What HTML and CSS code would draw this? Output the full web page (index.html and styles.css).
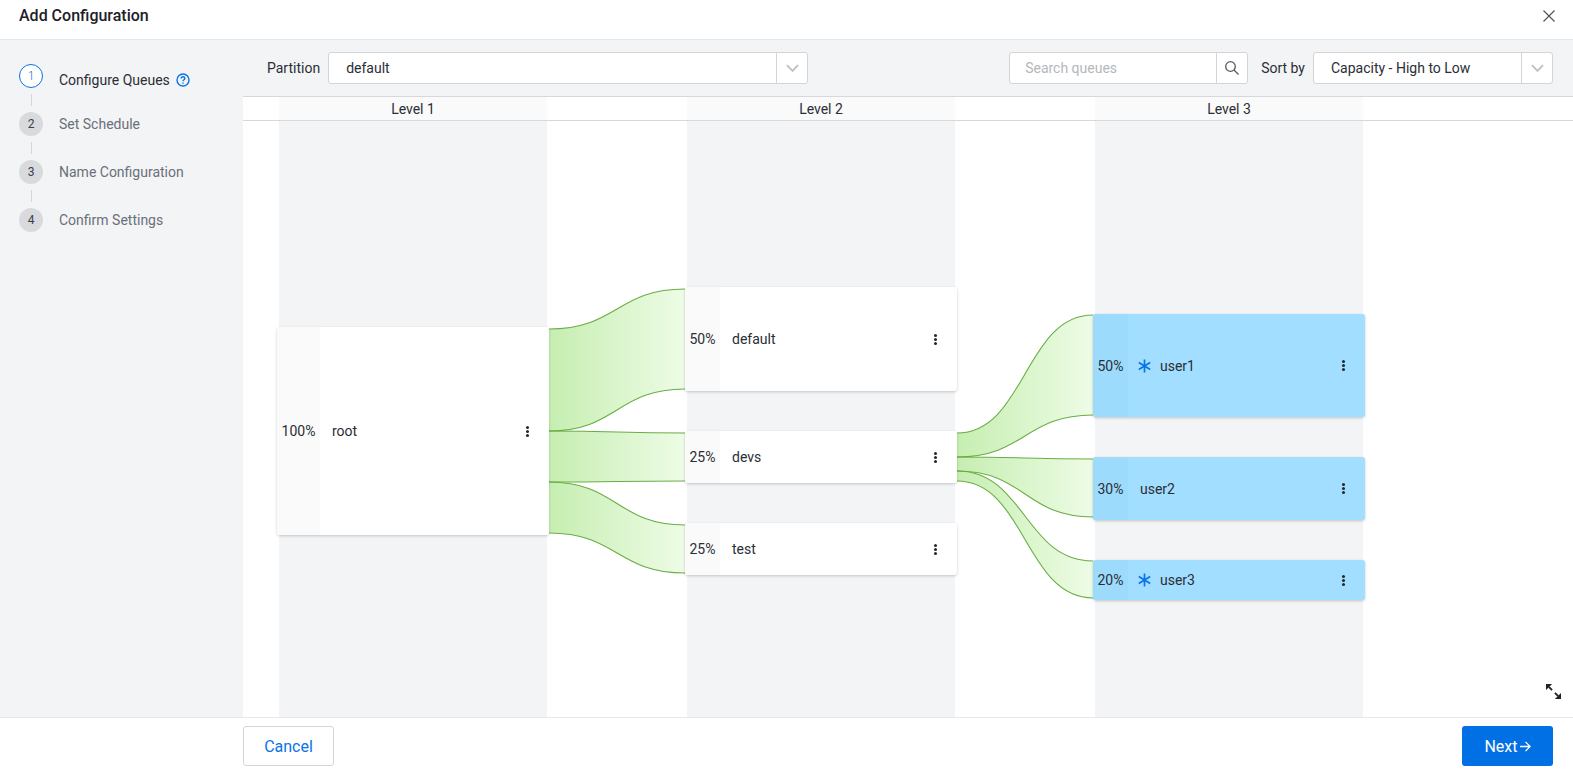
FILE: index.html
```html
<!DOCTYPE html>
<html lang="en">
<head>
<meta charset="utf-8">
<title>Add Configuration</title>
<link rel="stylesheet" href="styles.css">
</head>
<body>
<div class="dialog">
  <header class="title-bar">
    <h1 class="title">Add Configuration</h1>
    <svg class="close" viewBox="0 0 12 12"><path d="M.5.5l11 11M11.500.5l-11 11"/></svg>
  </header>
  <div class="main">
    <nav class="steps">
      <div class="step active"><span class="bubble">1</span><span class="step-label">Configure Queues</span>
        <svg class="help" viewBox="0 0 14 14"><circle cx="7" cy="7" r="6"/><path d="M5.200 5.500c0-1 .8-1.800 1.800-1.800s1.800.8 1.800 1.700c0 1.400-1.800 1.300-1.800 2.900"/><path d="M7 9.400v1.300"/></svg>
      </div>
      <div class="connector"></div>
      <div class="step"><span class="bubble">2</span><span class="step-label">Set Schedule</span></div>
      <div class="connector"></div>
      <div class="step"><span class="bubble">3</span><span class="step-label">Name Configuration</span></div>
      <div class="connector"></div>
      <div class="step"><span class="bubble">4</span><span class="step-label">Confirm Settings</span></div>
    </nav>
    <section class="content">
      <div class="toolbar">
        <label class="field-label">Partition</label>
        <div class="select partition"><span class="select-value">default</span><span class="select-arrow"><svg viewBox="0 0 14 8"><path d="M1 1l6 6 6-6"/></svg></span></div>
        <div class="spacer"></div>
        <div class="search"><span class="search-text">Search queues</span><span class="search-btn"><svg viewBox="0 0 14 14"><circle cx="5.500" cy="5.500" r="4.800"/><path d="M9 9l4.500 4.500"/></svg></span></div>
        <label class="field-label sort-label">Sort by</label>
        <div class="select sort"><span class="select-value">Capacity - High to Low</span><span class="select-arrow"><svg viewBox="0 0 14 8"><path d="M1 1l6 6 6-6"/></svg></span></div>
      </div>
      <div class="canvas">
        <div class="levels">
          <div class="level-head">Level 1</div>
          <div class="level-head">Level 2</div>
          <div class="level-head">Level 3</div>
        </div>
        <div class="stripes">
          <div class="stripe"></div>
          <div class="stripe"></div>
          <div class="stripe"></div>
        </div>
        <svg class="flows" viewBox="243 96 1330 621">
          <defs>
            <linearGradient id="flow" x1="0" x2="1" y1="0" y2="0">
              <stop offset="0" stop-color="#c6eeb1"/>
              <stop offset="1" stop-color="#eefce6"/>
            </linearGradient>
          </defs>
          <path class="flow" d="M549 329C617 329 617 289 685 289V389C617 389 617 431 549 431Z"/>
          <path class="flow" d="M549 431C617 431 617 433 685 433V481C617 481 617 482 549 482Z"/>
          <path class="flow" d="M549 482C617 482 617 525 685 525V573C617 573 617 533 549 533Z"/>
          <path class="flow" d="M957 433C1025 433 1025 315 1093 315V415C1025 415 1025 457 957 457Z"/>
          <path class="flow" d="M957 457C1025 457 1025 459 1093 459V517C1025 517 1025 471 957 471Z"/>
          <path class="flow" d="M957 471C1025 471 1025 561 1093 561V598C1025 598 1025 481 957 481Z"/>
          <path class="edge" d="M549 329C617 329 617 289 685 289M549 431C617 431 617 389 685 389"/>
          <path class="edge" d="M549 431C617 431 617 433 685 433M549 482C617 482 617 481 685 481"/>
          <path class="edge" d="M549 482C617 482 617 525 685 525M549 533C617 533 617 573 685 573"/>
          <path class="edge" d="M957 433C1025 433 1025 315 1093 315M957 457C1025 457 1025 415 1093 415"/>
          <path class="edge" d="M957 457C1025 457 1025 459 1093 459M957 471C1025 471 1025 517 1093 517"/>
          <path class="edge" d="M957 471C1025 471 1025 561 1093 561M957 481C1025 481 1025 598 1093 598"/>
        </svg>
        <div class="node node-root"><span class="pct">100%</span><span class="name">root</span><span class="dots"><i></i><i></i><i></i></span></div>
        <div class="node node-default"><span class="pct">50%</span><span class="name">default</span><span class="dots"><i></i><i></i><i></i></span></div>
        <div class="node node-devs"><span class="pct">25%</span><span class="name">devs</span><span class="dots"><i></i><i></i><i></i></span></div>
        <div class="node node-test"><span class="pct">25%</span><span class="name">test</span><span class="dots"><i></i><i></i><i></i></span></div>
        <div class="node leaf node-user1"><span class="pct">50%</span><svg class="star" viewBox="0 0 13 14"><path d="M6.500 .5v13M.8 3.500l11.400 7M12.200 3.500L.8 10.500"/></svg><span class="name">user1</span><span class="dots"><i></i><i></i><i></i></span></div>
        <div class="node leaf node-user2"><span class="pct">30%</span><span class="name">user2</span><span class="dots"><i></i><i></i><i></i></span></div>
        <div class="node leaf node-user3"><span class="pct">20%</span><svg class="star" viewBox="0 0 13 14"><path d="M6.500 .5v13M.8 3.500l11.400 7M12.200 3.500L.8 10.500"/></svg><span class="name">user3</span><span class="dots"><i></i><i></i><i></i></span></div>
        <svg class="expand" viewBox="0 0 16 16"><path class="expand-line" d="M3 3l3.500 3.500M13 13L9.500 9.500"/><path class="expand-head" d="M0 0h6.500L0 6.500zM16 16H9.500L16 9.500z"/></svg>
      </div>
    </section>
  </div>
  <footer class="footer">
    <button class="btn btn-cancel">Cancel</button>
    <button class="btn btn-next">Next<svg class="arrow" viewBox="0 0 12 12"><path d="M0 6h11M6 1l5 5-5 5"/></svg></button>
  </footer>
</div>
</body>
</html>
```
FILE: styles.css
```css
* { box-sizing: border-box; }
html, body { margin: 0; padding: 0; height: 100%; }
body { font-family: Roboto, "Liberation Sans", sans-serif; font-size: 14px; color: #2a2e35; background: #fff; overflow: hidden; }

.dialog { display: flex; flex-direction: column; height: 773px; }

.title-bar { flex: none; height: 40px; display: flex; align-items: center; justify-content: space-between; padding: 0 18px 8px 19px; border-bottom: 1px solid #e4e6e9; }
.title { margin: 0; font-size: 16px; font-weight: 500; color: #1d2127; }
.close { width: 12px; height: 12px; fill: none; stroke: #4a4f56; stroke-width: 1.1; }

.main { flex: 1; display: flex; min-height: 0; background: #f3f4f6; }

.steps { flex: none; width: 243px; padding: 24px 0 0 19px; }
.step { display: flex; align-items: center; height: 24px; color: #6a7079; }
.bubble { flex: none; width: 24px; height: 24px; border-radius: 50%; background: #d8dade; color: #3b4047; font-size: 12px; display: flex; align-items: center; justify-content: center; margin-right: 16px; }
.step.active { color: #2a2e35; }
.step.active .step-label { margin-top: 7px; }
.step.active .bubble { background: #fff; border: 1px solid #0a73e8; color: #0a73e8; font-weight: 300; }
.help { width: 14px; height: 14px; margin: 8px 0 0 6px; fill: none; stroke: #0a73e8; stroke-width: 1.4; }
.connector { width: 1px; height: 12px; margin: 6px 0 6px 12px; background: #d4d6da; }

.content { flex: 1; min-width: 0; display: flex; flex-direction: column; }

.toolbar { flex: none; height: 56px; display: flex; align-items: center; padding: 0 20px 0 24px; }
.field-label { margin-right: 8px; }
.spacer { flex: 1; }
.sort-label { margin-left: 13px; margin-right: 8px; }

.select { height: 32px; display: flex; align-items: stretch; background: #fff; border: 1px solid #d2d4d8; border-radius: 3px; }
.select-value { flex: 1; padding-left: 17px; line-height: 30px; }
.select-arrow { flex: none; width: 31px; border-left: 1px solid #d2d4d8; display: flex; align-items: center; justify-content: center; }
.select-arrow svg { width: 13px; height: 8px; fill: none; stroke: #bcbfc4; stroke-width: 2; }
.partition { width: 480px; }
.sort { width: 240px; }

.search { width: 239px; height: 32px; display: flex; background: #fff; border: 1px solid #d2d4d8; border-radius: 3px; }
.search-text { flex: 1; padding-left: 15px; line-height: 30px; color: #b4b8bd; }
.search-btn { flex: none; width: 31px; border-left: 1px solid #d2d4d8; display: flex; align-items: center; justify-content: center; }
.search-btn svg { width: 14px; height: 14px; fill: none; stroke: #555a61; stroke-width: 1.3; }

.canvas { position: relative; flex: 1; background: #fff; border-top: 1px solid #d6d8db; overflow: hidden; }
.levels { display: flex; gap: 140px; padding-left: 36px; height: 24px; border-bottom: 1px solid #d6d8db; }
.level-head { width: 268px; height: 23px; line-height: 25px; text-align: center; background: #fafafa; }
.stripes { display: flex; gap: 140px; padding-left: 36px; height: 596px; }
.stripe { width: 268px; background: #f3f4f6; }

.flows { position: absolute; left: 0; top: -1px; width: 1330px; height: 621px; }
.flow { fill: url(#flow); stroke: none; }
.edge { fill: none; stroke: #69ad44; stroke-width: 1.1; }

.node { position: absolute; width: 272px; display: flex; align-items: center; background: #fff; border-radius: 3px; box-shadow: 0 1px 3px rgba(0, 0, 0, .2); overflow: hidden; }
.pct { flex: none; align-self: stretch; width: 35px; display: flex; align-items: center; justify-content: center; background: #fafafa; }
.name { flex: 1; padding-left: 12px; }
.dots { flex: none; width: 3px; margin-right: 20px; display: flex; flex-direction: column; align-items: center; gap: 1px; }
.dots i { display: block; width: 3px; height: 3px; border-radius: 50%; background: #24292f; }

.node-root { left: 34px; top: 230px; height: 208px; }
.node-root .pct { width: 43px; }
.node-default { left: 442px; top: 190px; height: 104px; }
.node-devs { left: 442px; top: 334px; height: 52px; }
.node-test { left: 442px; top: 426px; height: 52px; }
.node-user1 { left: 850px; top: 217px; height: 103px; }
.node-user2 { left: 850px; top: 360px; height: 63px; }
.node-user3 { left: 850px; top: 463px; height: 40px; }

.leaf { background: #a1deff; }
.leaf .pct { background: #9ddbfc; }
.star { flex: none; width: 13px; height: 14px; margin-left: 10px; margin-right: -3px; fill: none; stroke: #0a73e8; stroke-width: 1.7; }

.expand { position: absolute; right: 12px; bottom: 18px; width: 15px; height: 15px; }
.expand-line { fill: none; stroke: #1f2328; stroke-width: 2; }
.expand-head { fill: #1f2328; }

.footer { flex: none; height: 56px; display: flex; justify-content: space-between; align-items: flex-start; padding: 8px 20px 0 243px; background: #fff; border-top: 1px solid #e6e7e9; }
.btn { height: 40px; width: 91px; border-radius: 3px; font-family: inherit; font-size: 16px; display: flex; align-items: center; justify-content: center; cursor: pointer; }
.btn-cancel { background: #fff; border: 1px solid #d2d4d8; color: #0a73e8; }
.btn-next { background: #0170e5; border: none; color: #fff; }
.arrow { width: 11px; height: 11px; margin-left: 2px; fill: none; stroke: #fff; stroke-width: 1.4; }
```
